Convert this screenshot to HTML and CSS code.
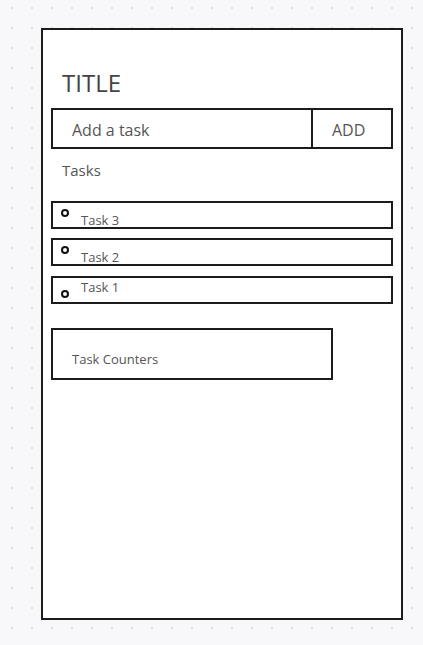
FILE: index.html
```html
<!DOCTYPE html>
<html lang="en">
<head>
    <meta charset="UTF-8">
    <meta name="viewport" content="width=device-width, initial-scale=1.0">
    <title>Todo</title>
    <link rel="stylesheet" href="styles.css">
</head>
<body>
    <main class="phone">
        <h1 class="title">TITLE</h1>

        <form class="add-row" onsubmit="return false">
            <input type="text" class="add-input" placeholder="Add a task">
            <button type="button" class="add-btn">ADD</button>
        </form>

        <h2 class="list-title">Tasks</h2>

        <!-- newest task on top -->
        <ul class="tasks">
            <li class="task">
                <span class="dot"></span>
                <span class="task-name">Task 3</span>
            </li>
            <li class="task">
                <span class="dot"></span>
                <span class="task-name">Task 2</span>
            </li>
            <li class="task task--low">
                <span class="dot"></span>
                <span class="task-name">Task 1</span>
            </li>
        </ul>

        <div class="counters">Task Counters</div>
    </main>
</body>
</html>
```

FILE: styles.css
```css
body {
    margin: 0;
    min-height: 645px;
    background-color: #f8f8fa;
    background-image: radial-gradient(circle, #dddde3 1px, transparent 1.6px);
    background-size: 20px 20px;
    background-position: 2px -2px;
    font-family: "Open Sans", "Noto Sans", sans-serif;
    color: #4a4a4a;
}

.phone {
    box-sizing: border-box;
    width: 362px;
    height: 592px;
    margin: 28px 0 0 41px;
    padding: 0 8px;
    border: 2px solid #1c1c1c;
    background-color: #fff;
}

.title {
    margin: 36px 0 9px 11px;
    font-size: 24px;
    font-weight: 400;
    line-height: 33px;
    color: #444;
}

.add-row {
    display: flex;
    box-sizing: border-box;
    height: 41px;
    margin: 0;
    border: 2px solid #1c1c1c;
}

.add-input {
    flex: 1;
    min-width: 0;
    margin: 0;
    padding: 2px 0 0 19px;
    border: none;
    border-right: 2px solid #1c1c1c;
    font: inherit;
    font-size: 16px;
    color: #555;
    outline: none;
}

.add-input::placeholder {
    color: #555;
    opacity: 1;
}

.add-btn {
    width: 78px;
    margin: 0;
    padding: 2px 0 0 19px;
    border: none;
    background-color: #fff;
    text-align: left;
    font: inherit;
    font-size: 16px;
    color: #555;
}

.list-title {
    margin: 11px 0 21px 11px;
    font-size: 15px;
    font-weight: 400;
    line-height: 20px;
    color: #555;
}

.tasks {
    display: flex;
    flex-direction: column;
    gap: 9px;
    margin: 0;
    padding: 0;
    list-style: none;
}

.task {
    display: flex;
    align-items: flex-start;
    box-sizing: border-box;
    height: 28px;
    border: 2px solid #1c1c1c;
}

.dot {
    box-sizing: border-box;
    width: 8px;
    height: 8px;
    margin: 6px 0 0 8px;
    border: 2px solid #111;
    border-radius: 50%;
}

.task-name {
    margin: 8px 0 0 12px;
    font-size: 13px;
    line-height: 18px;
    color: #555;
}

.task--low {
    margin-top: 1px;
}

.task--low .dot {
    margin-top: 12px;
}

.task--low .task-name {
    margin-top: 0;
}

.counters {
    box-sizing: border-box;
    width: 282px;
    height: 52px;
    margin-top: 24px;
    padding: 20px 19px 0;
    border: 2px solid #1c1c1c;
    font-size: 13px;
    line-height: 18px;
    color: #555;
}
```
